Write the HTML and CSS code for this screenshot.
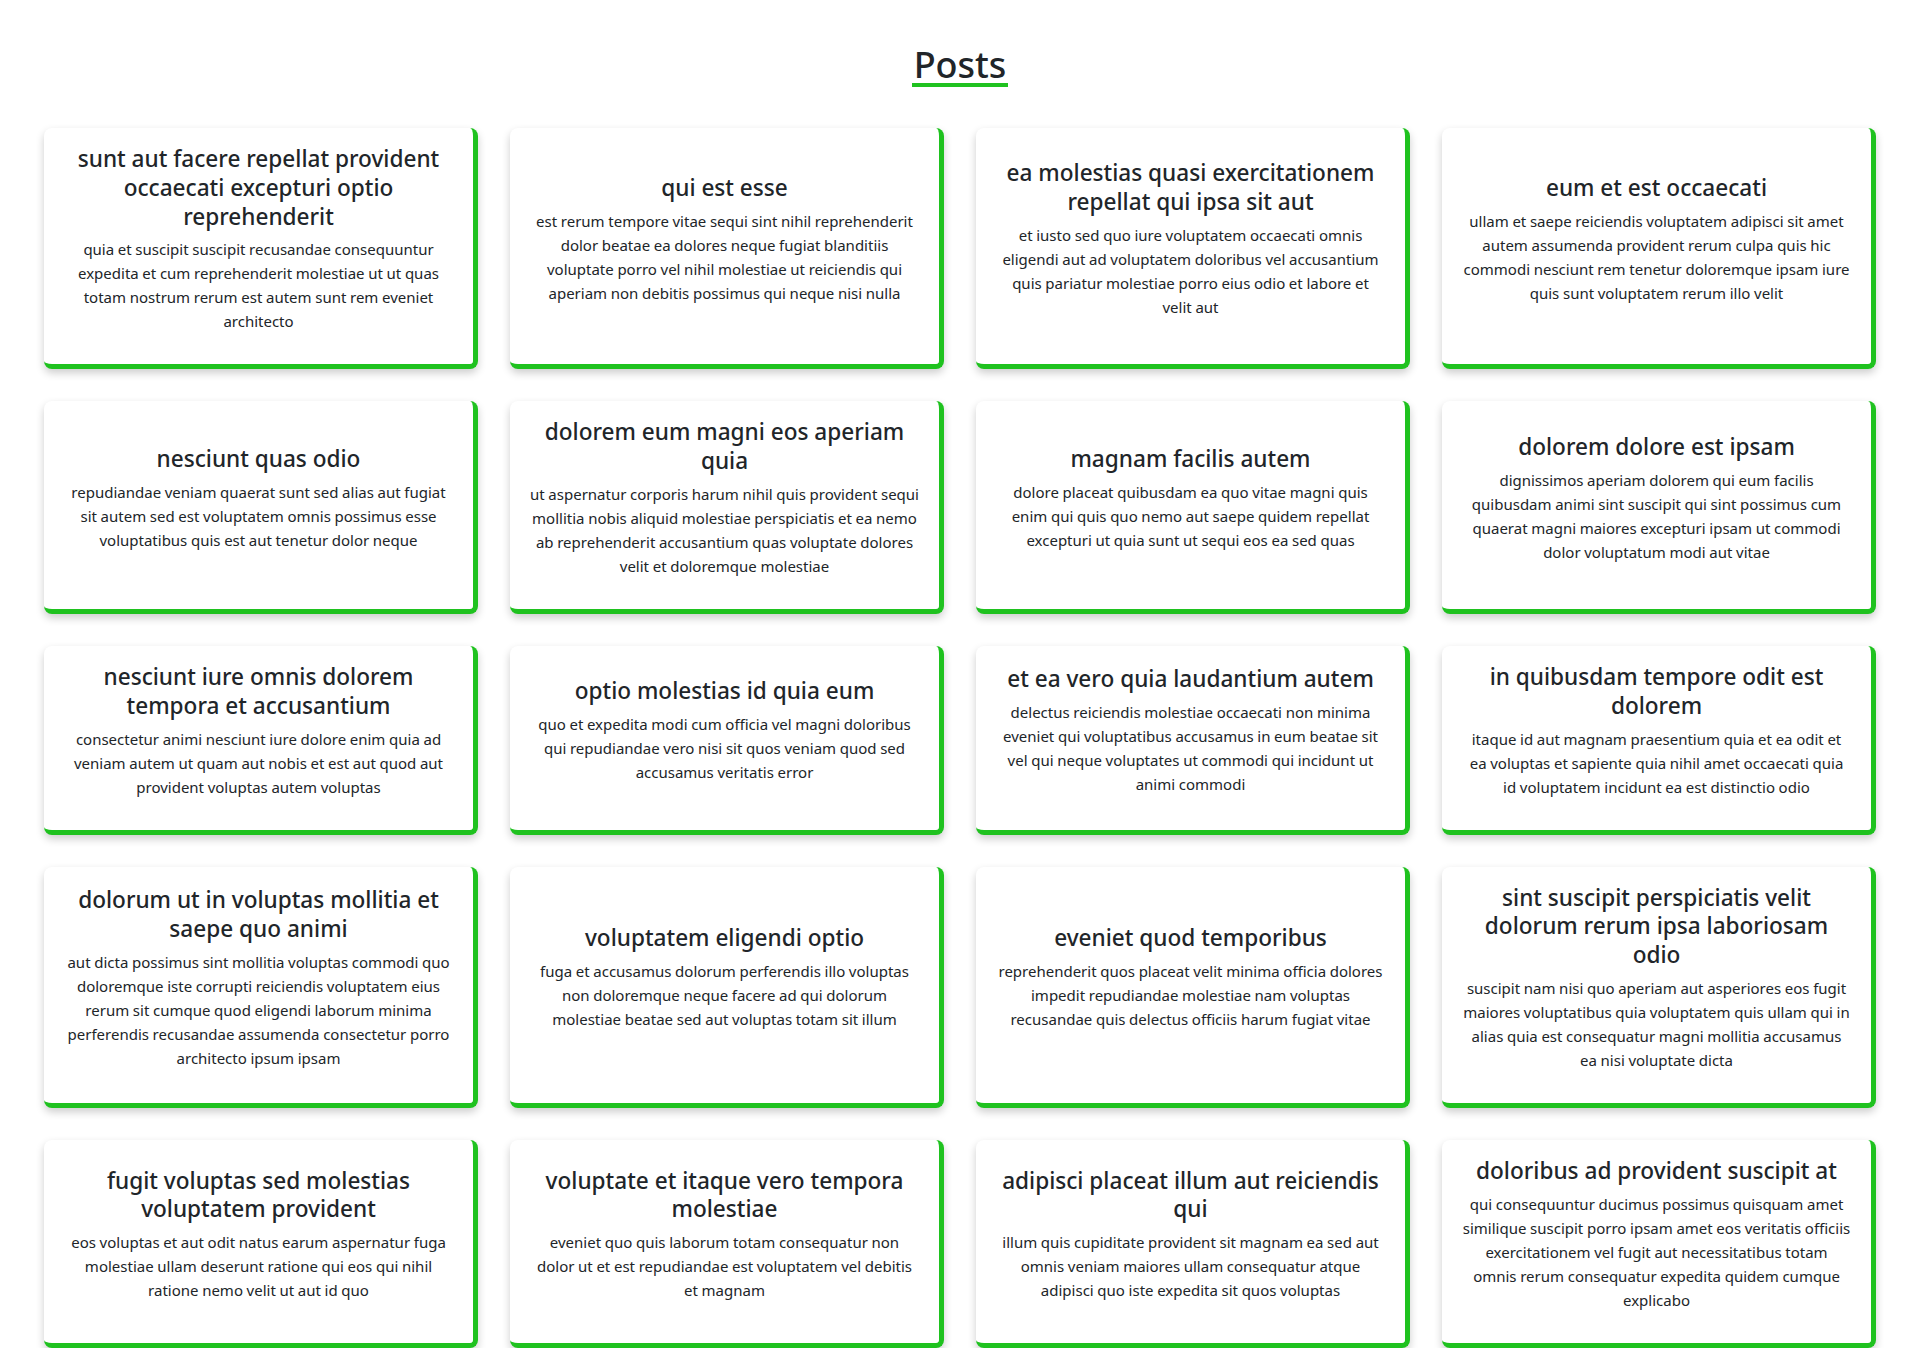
FILE: index.html
```html
<!DOCTYPE html>
<html lang="en">
<head>
<meta charset="utf-8">
<title>Posts</title>
<link rel="stylesheet" href="styles.css">
</head>
<body>
<header class="page-header">
  <h1 class="page-title"><span class="page-title-text">Posts</span></h1>
</header>
<main class="posts">
  <article class="post-card"><h2 class="post-title">sunt aut facere repellat provident occaecati excepturi optio reprehenderit</h2><p class="post-body">quia et suscipit suscipit recusandae consequuntur expedita et cum reprehenderit molestiae ut ut quas totam nostrum rerum est autem sunt rem eveniet architecto</p></article>
  <article class="post-card"><h2 class="post-title">qui est esse</h2><p class="post-body">est rerum tempore vitae sequi sint nihil reprehenderit dolor beatae ea dolores neque fugiat blanditiis voluptate porro vel nihil molestiae ut reiciendis qui aperiam non debitis possimus qui neque nisi nulla</p></article>
  <article class="post-card"><h2 class="post-title">ea molestias quasi exercitationem repellat qui ipsa sit aut</h2><p class="post-body">et iusto sed quo iure voluptatem occaecati omnis eligendi aut ad voluptatem doloribus vel accusantium quis pariatur molestiae porro eius odio et labore et velit aut</p></article>
  <article class="post-card"><h2 class="post-title">eum et est occaecati</h2><p class="post-body">ullam et saepe reiciendis voluptatem adipisci sit amet autem assumenda provident rerum culpa quis hic commodi nesciunt rem tenetur doloremque ipsam iure quis sunt voluptatem rerum illo velit</p></article>
  <article class="post-card"><h2 class="post-title">nesciunt quas odio</h2><p class="post-body">repudiandae veniam quaerat sunt sed alias aut fugiat sit autem sed est voluptatem omnis possimus esse voluptatibus quis est aut tenetur dolor neque</p></article>
  <article class="post-card"><h2 class="post-title">dolorem eum magni eos aperiam quia</h2><p class="post-body">ut aspernatur corporis harum nihil quis provident sequi mollitia nobis aliquid molestiae perspiciatis et ea nemo ab reprehenderit accusantium quas voluptate dolores velit et doloremque molestiae</p></article>
  <article class="post-card"><h2 class="post-title">magnam facilis autem</h2><p class="post-body">dolore placeat quibusdam ea quo vitae magni quis enim qui quis quo nemo aut saepe quidem repellat excepturi ut quia sunt ut sequi eos ea sed quas</p></article>
  <article class="post-card"><h2 class="post-title">dolorem dolore est ipsam</h2><p class="post-body">dignissimos aperiam dolorem qui eum facilis quibusdam animi sint suscipit qui sint possimus cum quaerat magni maiores excepturi ipsam ut commodi dolor voluptatum modi aut vitae</p></article>
  <article class="post-card"><h2 class="post-title">nesciunt iure omnis dolorem tempora et accusantium</h2><p class="post-body">consectetur animi nesciunt iure dolore enim quia ad veniam autem ut quam aut nobis et est aut quod aut provident voluptas autem voluptas</p></article>
  <article class="post-card"><h2 class="post-title">optio molestias id quia eum</h2><p class="post-body">quo et expedita modi cum officia vel magni doloribus qui repudiandae vero nisi sit quos veniam quod sed accusamus veritatis error</p></article>
  <article class="post-card"><h2 class="post-title">et ea vero quia laudantium autem</h2><p class="post-body">delectus reiciendis molestiae occaecati non minima eveniet qui voluptatibus accusamus in eum beatae sit vel qui neque voluptates ut commodi qui incidunt ut animi commodi</p></article>
  <article class="post-card"><h2 class="post-title">in quibusdam tempore odit est dolorem</h2><p class="post-body">itaque id aut magnam praesentium quia et ea odit et ea voluptas et sapiente quia nihil amet occaecati quia id voluptatem incidunt ea est distinctio odio</p></article>
  <article class="post-card"><h2 class="post-title">dolorum ut in voluptas mollitia et saepe quo animi</h2><p class="post-body">aut dicta possimus sint mollitia voluptas commodi quo doloremque iste corrupti reiciendis voluptatem eius rerum sit cumque quod eligendi laborum minima perferendis recusandae assumenda consectetur porro architecto ipsum ipsam</p></article>
  <article class="post-card"><h2 class="post-title">voluptatem eligendi optio</h2><p class="post-body">fuga et accusamus dolorum perferendis illo voluptas non doloremque neque facere ad qui dolorum molestiae beatae sed aut voluptas totam sit illum</p></article>
  <article class="post-card"><h2 class="post-title">eveniet quod temporibus</h2><p class="post-body">reprehenderit quos placeat velit minima officia dolores impedit repudiandae molestiae nam voluptas recusandae quis delectus officiis harum fugiat vitae</p></article>
  <article class="post-card"><h2 class="post-title">sint suscipit perspiciatis velit dolorum rerum ipsa laboriosam odio</h2><p class="post-body">suscipit nam nisi quo aperiam aut asperiores eos fugit maiores voluptatibus quia voluptatem quis ullam qui in alias quia est consequatur magni mollitia accusamus ea nisi voluptate dicta</p></article>
  <article class="post-card"><h2 class="post-title">fugit voluptas sed molestias voluptatem provident</h2><p class="post-body">eos voluptas et aut odit natus earum aspernatur fuga molestiae ullam deserunt ratione qui eos qui nihil ratione nemo velit ut aut id quo</p></article>
  <article class="post-card"><h2 class="post-title">voluptate et itaque vero tempora molestiae</h2><p class="post-body">eveniet quo quis laborum totam consequatur non dolor ut et est repudiandae est voluptatem vel debitis et magnam</p></article>
  <article class="post-card"><h2 class="post-title">adipisci placeat illum aut reiciendis qui</h2><p class="post-body">illum quis cupiditate provident sit magnam ea sed aut omnis veniam maiores ullam consequatur atque adipisci quo iste expedita sit quos voluptas</p></article>
  <article class="post-card"><h2 class="post-title">doloribus ad provident suscipit at</h2><p class="post-body">qui consequuntur ducimus possimus quisquam amet similique suscipit porro ipsam amet eos veritatis officiis exercitationem vel fugit aut necessitatibus totam omnis rerum consequatur expedita quidem cumque explicabo</p></article>
</main>
</body>
</html>
```
FILE: styles.css
```css
html, body {
  margin: 0;
  padding: 0;
  background: #ffffff;
}

body {
  font-family: "Noto Sans", "Open Sans", sans-serif;
  color: #212529;
}

.page-header {
  padding-top: 47px;
  text-align: center;
}

.page-title {
  margin: 0;
  font-size: 36px;
  font-weight: 500;
  line-height: 36px;
}

.page-title-text {
  display: inline-block;
  padding: 0 2px;
  border-bottom: 4px solid #1fc21f;
}

.posts {
  display: grid;
  grid-template-columns: repeat(4, 1fr);
  gap: 32px;
  padding: 41px 44px 0;
}

.post-card {
  display: flex;
  flex-direction: column;
  justify-content: center;
  padding: 15px 19.95px;
  background: #ffffff;
  border-right: 5px solid #1fc21f;
  border-bottom: 5px solid #1fc21f;
  border-radius: 8px;
  box-shadow: 0 4px 8px rgba(0, 0, 0, 0.2);
  text-align: center;
}

.post-title {
  margin: 2px 0 6px;
  font-size: 22.6px;
  font-weight: 500;
  line-height: 28.8px;
}

.post-body {
  margin: 0 0 16px;
  font-size: 15px;
  line-height: 24px;
  word-spacing: -0.25px;
}
```
